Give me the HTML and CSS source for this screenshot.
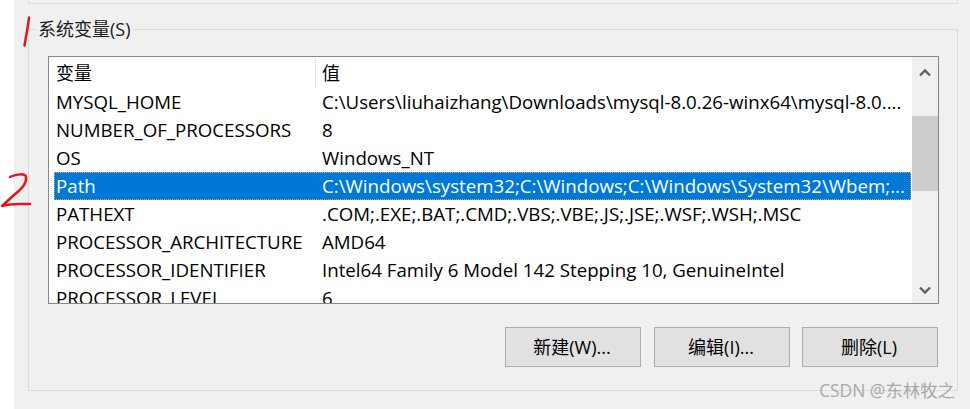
FILE: index.html
```html
<!DOCTYPE html>
<html lang="zh">
<head>
<meta charset="utf-8">
<title>系统变量</title>
<link rel="stylesheet" href="styles.css">
</head>
<body>
<div class="dialog">
  <div class="group-prev"></div>
  <section class="group">
    <h2 class="legend">系统变量(S)</h2>
    <div class="listbox">
      <div class="list">
        <div class="row head"><span class="name">变量</span><span class="value">值</span></div>
        <div class="row"><span class="name">MYSQL_HOME</span><span class="value">C:\Users\liuhaizhang\Downloads\mysql-8.0.26-winx64\mysql-8.0....</span></div>
        <div class="row"><span class="name">NUMBER_OF_PROCESSORS</span><span class="value">8</span></div>
        <div class="row"><span class="name">OS</span><span class="value">Windows_NT</span></div>
        <div class="row selected"><span class="name">Path</span><span class="value">C:\Windows\system32;C:\Windows;C:\Windows\System32\Wbem;...</span></div>
        <div class="row"><span class="name">PATHEXT</span><span class="value">.COM;.EXE;.BAT;.CMD;.VBS;.VBE;.JS;.JSE;.WSF;.WSH;.MSC</span></div>
        <div class="row"><span class="name">PROCESSOR_ARCHITECTURE</span><span class="value">AMD64</span></div>
        <div class="row"><span class="name">PROCESSOR_IDENTIFIER</span><span class="value">Intel64 Family 6 Model 142 Stepping 10, GenuineIntel</span></div>
        <div class="row"><span class="name">PROCESSOR_LEVEL</span><span class="value">6</span></div>
      </div>
      <div class="scrollbar">
        <svg class="arrow" width="12" height="9" viewBox="0 0 12 9"><path d="M1 7.500 6 2.500l5 5" fill="none" stroke="#606060" stroke-width="2.400"/></svg>
        <div class="track"><div class="thumb"></div></div>
        <svg class="arrow arrow-down" width="12" height="9" viewBox="0 0 12 9"><path d="M1 1.500 6 6.500l5-5" fill="none" stroke="#606060" stroke-width="2.400"/></svg>
      </div>
    </div>
    <div class="buttons">
      <button class="btn btn-first">新建(W)...</button>
      <button class="btn">编辑(I)...</button>
      <button class="btn">删除(L)</button>
    </div>
  </section>
</div>
<svg class="mark mark-one" width="12" height="32" viewBox="0 0 12 32"><path d="M9 1.500C8.500 8 6 20 4.500 29.500" fill="none" stroke="#e8141c" stroke-width="2.500" stroke-linecap="round"/></svg>
<svg class="mark mark-two" width="32" height="38" viewBox="0 0 32 38"><path d="M10 6C16 3 26 2 26 6 27 12 22 18 14 24L2 35C10 32 20 33 30 33" fill="none" stroke="#e8141c" stroke-width="2.500" stroke-linecap="round" stroke-linejoin="round"/></svg>
<div class="watermark">CSDN @东林牧之</div>
</body>
</html>
```
FILE: styles.css
```css
* { box-sizing: border-box; }
html, body { margin: 0; padding: 0; }
body {
  position: relative;
  width: 970px;
  height: 409px;
  overflow: hidden;
  background: #fff;
  font-family: "Open Sans", "Noto Sans CJK SC", sans-serif;
  color: #000;
}
.dialog {
  margin-left: 14px;
  height: 409px;
  padding: 0 12px 0 14px;
  background: #f0f0f0;
}
.group-prev {
  height: 4px;
  border: 1px solid #dcdcdc;
  border-top: 0;
}
.group {
  position: relative;
  height: 362px;
  margin-top: 25px;
  padding: 26px 18px 0 19px;
  border: 1px solid #dcdcdc;
}
.legend {
  position: absolute;
  left: 7px;
  top: -13px;
  margin: 0;
  padding: 0 2px;
  background: #f0f0f0;
  font-size: 18px;
  font-weight: 400;
  line-height: 24px;
  color: #1a1a1a;
}
.listbox {
  display: flex;
  height: 248px;
  border: 1px solid #828790;
  background: #fff;
}
.list { flex: 1; min-width: 0; overflow: hidden; padding-left: 5px; }
.row {
  display: flex;
  height: 28px;
  padding-bottom: 2px;
  align-items: center;
  font-size: 18.7px;
  white-space: nowrap;
  margin-right: 1px;
}
.head { height: 31px; padding-bottom: 0; font-size: 18px; }
.head .name { border-right: 1px solid #e5e5e5; height: 30px; line-height: 30px; }
.head .value { line-height: 30px; }
.name { width: 262px; padding-left: 2px; flex: none; }
.value { padding-left: 6px; }
.selected {
  background: #0078d7;
  color: #fff;
  outline: 1px dotted #e0a060;
  outline-offset: -1px;
}
.scrollbar {
  flex: none;
  width: 26px;
  display: flex;
  flex-direction: column;
  align-items: center;
  background: #f0f0f0;
}
.arrow { flex: none; margin: 11px 0; }
.arrow-down { margin-bottom: 8px; }
.track { flex: 1; width: 100%; padding-top: 28px; }
.thumb { height: 75px; background: #cdcdcd; }
.buttons {
  display: flex;
  justify-content: flex-end;
  gap: 12px;
  margin-top: 23px;
  margin-right: 1px;
}
.btn-first { margin-right: 1px; }
.btn {
  width: 136px;
  height: 40px;
  padding: 0 2px 2px 0;
  border: 1px solid #adadad;
  background: #e1e1e1;
  font: inherit;
  font-size: 18px;
  color: #000;
}
.mark { position: absolute; }
.mark-one { left: 20px; top: 16px; }
.mark-two { left: 0; top: 171px; }
.watermark {
  position: absolute;
  right: 15px;
  bottom: 7px;
  font-size: 17.4px;
  color: #a8a8a8;
}
```
